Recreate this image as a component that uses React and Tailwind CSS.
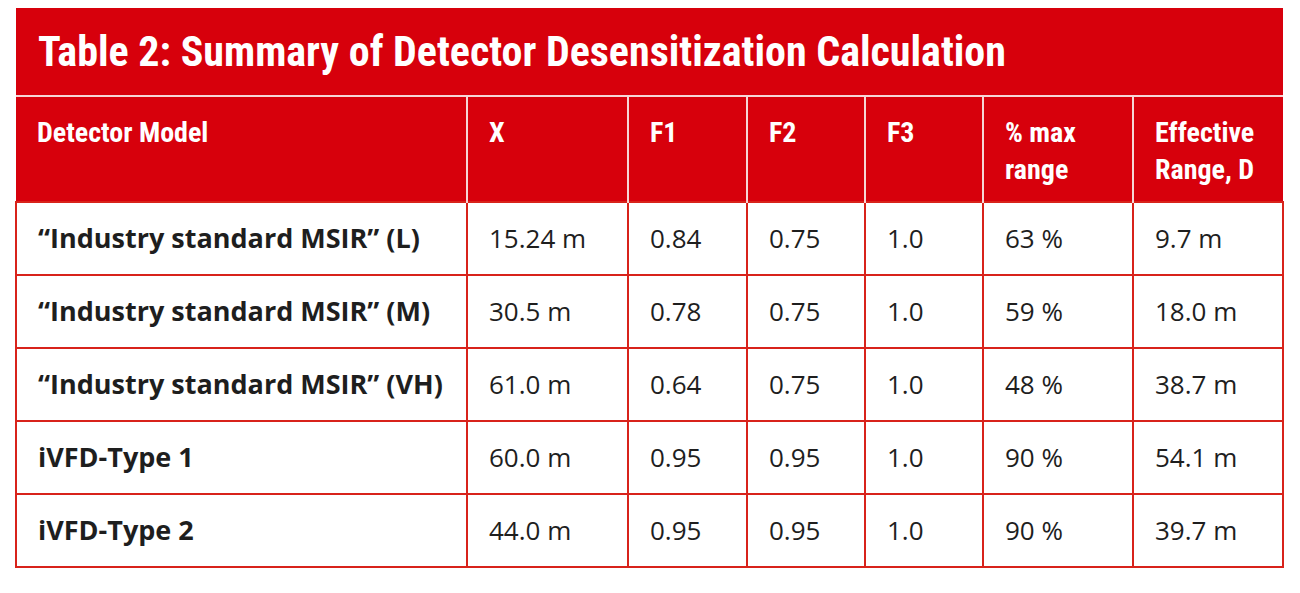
const rows = [
  ["“Industry standard MSIR” (L)", "15.24 m", "0.84", "0.75", "1.0", "63 %", "9.7 m"],
  ["“Industry standard MSIR” (M)", "30.5 m", "0.78", "0.75", "1.0", "59 %", "18.0 m"],
  ["“Industry standard MSIR” (VH)", "61.0 m", "0.64", "0.75", "1.0", "48 %", "38.7 m"],
  ["iVFD-Type 1", "60.0 m", "0.95", "0.95", "1.0", "90 %", "54.1 m"],
  ["iVFD-Type 2", "44.0 m", "0.95", "0.95", "1.0", "90 %", "39.7 m"],
];

const headers = ["Detector Model", "X", "F1", "F2", "F3", "% max range", "Effective Range, D"];

export default function App() {
  return (
    <div className="bg-white min-h-[593px] pt-[8px] pl-[15px]">
      <table className="w-[1267px] table-fixed border-collapse">
        <colgroup>
          <col className="w-[451px]" />
          <col className="w-[161px]" />
          <col className="w-[119px]" />
          <col className="w-[118px]" />
          <col className="w-[118px]" />
          <col className="w-[150px]" />
          <col className="w-[150px]" />
        </colgroup>
        <thead>
          <tr>
            <th
              colSpan={7}
              className="bg-[#d7000c] h-[88px] pl-[22px] text-left align-middle text-white font-bold text-[42px] leading-none font-['Roboto_Condensed',sans-serif]"
            >
              Table 2: Summary of Detector Desensitization Calculation
            </th>
          </tr>
          <tr className="bg-[#d7000c]">
            {headers.map((h, i) => (
              <th
                key={h}
                className={`h-[106px] pl-[21px] pr-2 pt-[17px] text-left align-top text-white font-bold text-[28px] leading-[37px] border-t-2 border-[#f6d6d6] font-['Roboto_Condensed',sans-serif] ${i > 0 ? "border-l-2" : ""}`}
              >
                {h}
              </th>
            ))}
          </tr>
        </thead>
        <tbody className="font-['Open_Sans',sans-serif] text-[#1e1e1e]">
          {rows.map((r) => (
            <tr key={r[0]} className="h-[73px]">
              {r.map((c, i) => (
                <td
                  key={i}
                  className={`pl-[21px] align-middle border-2 border-[#d8231b] whitespace-nowrap ${i === 0 ? "font-bold text-[27px]" : "text-[26px]"}`}
                >
                  {c}
                </td>
              ))}
            </tr>
          ))}
        </tbody>
      </table>
    </div>
  );
}
